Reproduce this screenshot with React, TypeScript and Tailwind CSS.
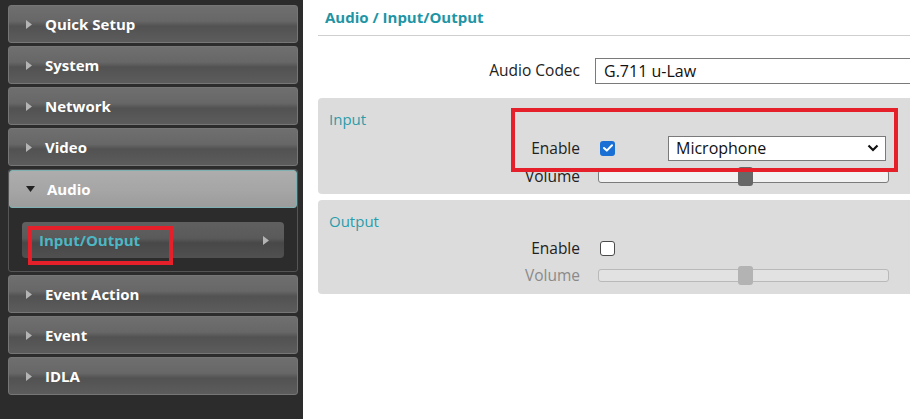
import React from 'react';

const navBefore = ['Quick Setup', 'System', 'Network', 'Video'];
const navAfter = ['Event Action', 'Event', 'IDLA'];

const Caret = () => (
  <svg width="6" height="9" viewBox="0 0 6 9" className="shrink-0">
    <path d="M0 0 L6 4.5 L0 9 Z" fill="#b4b4b4" />
  </svg>
);

const NavItem = ({ label }: { label: string }) => (
  <div className="flex h-[38px] items-center gap-[13px] rounded-[3px] border border-[#767676] bg-[linear-gradient(to_bottom,#6f6f6f_0%,#676767_42%,#525252_56%,#5c5c5c_100%)] pl-[17px]">
    <Caret />
    <span className="text-[15px] font-bold text-white">{label}</span>
  </div>
);

const CheckBox = ({ checked }: { checked?: boolean }) =>
  checked ? (
    <div className="flex h-[15px] w-[15px] items-center justify-center rounded-[3px] bg-[#1a6fd4]">
      <svg width="10" height="8" viewBox="0 0 10 8">
        <path d="M1 4 L3.8 6.6 L9 1.2" stroke="white" strokeWidth="2" fill="none" strokeLinecap="round" strokeLinejoin="round" />
      </svg>
    </div>
  ) : (
    <div className="h-[15px] w-[15px] rounded-[3px] border border-[#4a4a4a] bg-white" />
  );

const Slider = ({ disabled }: { disabled?: boolean }) => (
  <div className={`relative h-[13px] w-[291px] rounded-[3px] border ${disabled ? 'border-[#b9b9b9] bg-[#e2e2e2]' : 'border-[#7b7b7b] bg-[#f2f2f2]'}`}>
    <div className={`absolute left-[139px] top-[-4px] h-[19px] w-[15px] rounded-[3px] ${disabled ? 'bg-[#b3b3b3]' : 'bg-[#676767]'}`} />
  </div>
);

export default function App() {
  return (
    <div className="relative flex h-[419px] w-[910px] overflow-hidden bg-white" style={{ fontFamily: '"Open Sans", "Noto Sans", sans-serif' }}>
      {/* sidebar */}
      <aside className="flex w-[303px] shrink-0 flex-col gap-[3px] bg-[#2c2c2c] pl-[8px] pr-[5px] pt-[5px]">
        {navBefore.map((n) => (
          <NavItem key={n} label={n} />
        ))}
        <div className="h-[103px] rounded-[3px] border border-[#555555]">
          <div className="flex h-[38px] items-center gap-[12px] rounded-[3px] border border-[#7fb1b3] bg-[linear-gradient(to_bottom,#adadad_0%,#a6a6a6_50%,#9c9c9c_100%)] pl-[16px]">
            <svg width="9" height="6" viewBox="0 0 9 6" className="shrink-0">
              <path d="M0 0 L9 0 L4.5 6 Z" fill="#222222" />
            </svg>
            <span className="text-[15px] font-bold text-white">Audio</span>
          </div>
          <div className="px-[13px] pt-[14px]">
            <div className="flex h-[36px] items-center justify-between rounded-[4px] bg-[linear-gradient(to_bottom,#606060_0%,#5a5a5a_45%,#484848_58%,#505050_100%)] pl-[17px] pr-[15px]">
              <span className="text-[15px] font-bold text-[#4db7c3]">Input/Output</span>
              <Caret />
            </div>
          </div>
        </div>
        {navAfter.map((n) => (
          <NavItem key={n} label={n} />
        ))}
      </aside>

      {/* content */}
      <main className="min-w-0 flex-1 overflow-hidden pl-[15px]">
        <div className="flex h-[36px] w-[620px] items-center border-b border-[#cfcfcf] pl-[7px] pb-[1px]">
          <span className="text-[15px] font-bold text-[#1e95a5]">Audio / Input/Output</span>
        </div>

        <div className="mt-[21px] flex h-[27px] w-[620px] items-center">
          <span className="w-[262px] shrink-0 pt-[1px] text-right text-[15.5px] text-[#222]">Audio Codec</span>
          <div className="ml-[15px] flex h-[26px] w-[340px] shrink-0 items-center border border-[#7a7a7a] pl-[8px] text-[16px] text-[#111]">
            G.711 u-Law
          </div>
        </div>

        {/* input panel */}
        <section className="mt-[14px] h-[96px] w-[620px] rounded-[4px] bg-[#dcdcdc] pt-[10px]">
          <div className="h-[22px] pl-[11px] text-[15px] leading-[22px] text-[#2a9cab]">Input</div>
          <div className="mt-[4px] flex h-[28px] items-center">
            <span className="w-[262px] shrink-0 pt-[1px] text-right text-[15.5px] text-[#222]">Enable</span>
            <div className="ml-[20px]">
              <CheckBox checked />
            </div>
            <div className="ml-[53px] flex h-[25px] w-[218px] shrink-0 items-center justify-between border border-[#7a7a7a] bg-white pl-[7px] pr-[6px] text-[16px] text-[#111]">
              <span>Microphone</span>
              <svg width="12" height="8" viewBox="0 0 12 8">
                <path d="M1.5 1.5 L6 6 L10.5 1.5" stroke="#111" strokeWidth="2.2" fill="none" />
              </svg>
            </div>
          </div>
          <div className="flex h-[28px] items-center">
            <span className="w-[262px] shrink-0 pt-[1px] text-right text-[15.5px] text-[#222]">Volume</span>
            <div className="ml-[18px]">
              <Slider />
            </div>
          </div>
        </section>

        {/* output panel */}
        <section className="mt-[6px] h-[94px] w-[620px] rounded-[4px] bg-[#dcdcdc] pt-[10px]">
          <div className="h-[22px] pl-[11px] text-[15px] leading-[22px] text-[#2a9cab]">Output</div>
          <div className="mt-[2px] flex h-[28px] items-center">
            <span className="w-[262px] shrink-0 pt-[1px] text-right text-[15.5px] text-[#222]">Enable</span>
            <div className="ml-[20px]">
              <CheckBox />
            </div>
          </div>
          <div className="flex h-[26px] items-center">
            <span className="w-[262px] shrink-0 pt-[1px] text-right text-[15.5px] text-[#8a8a8a]">Volume</span>
            <div className="ml-[18px]">
              <Slider disabled />
            </div>
          </div>
        </section>
      </main>

      {/* red annotation boxes */}
      <div className="pointer-events-none absolute left-[28px] top-[226px] h-[39px] w-[145px] border-[4px] border-[#e5202b]" />
      <div className="pointer-events-none absolute left-[511px] top-[108px] h-[64px] w-[387px] border-[4px] border-[#e5202b]" />
    </div>
  );
}
